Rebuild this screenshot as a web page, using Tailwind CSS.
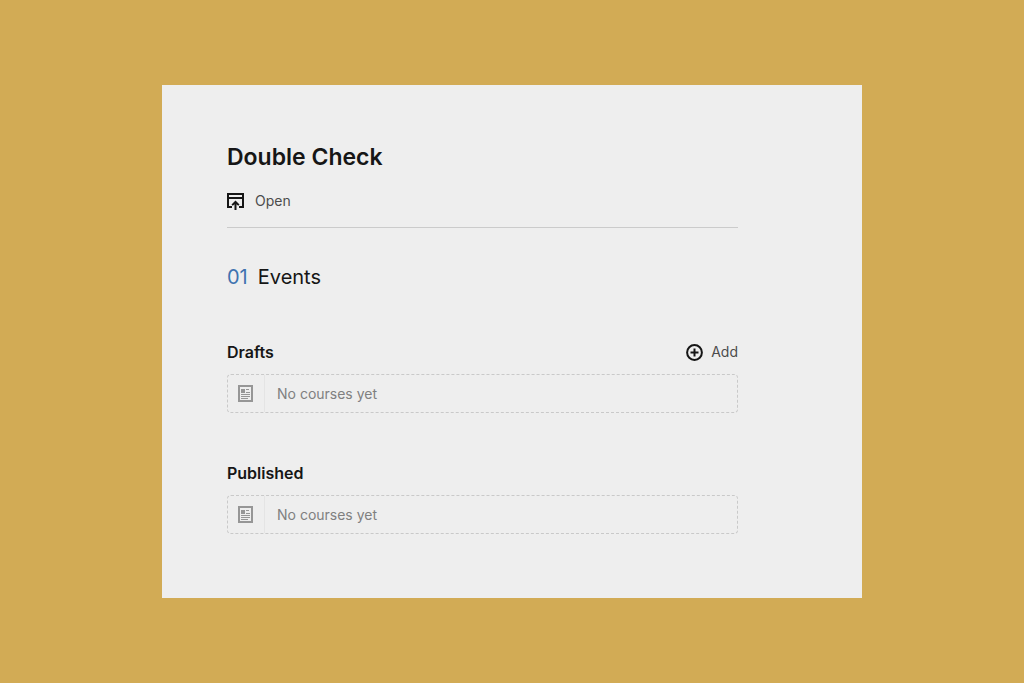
<!DOCTYPE html>
<html lang="en">
<head>
    <meta charset="UTF-8">
    <meta name="viewport" content="width=device-width, initial-scale=1">
    <title>Double Check</title>
    <script src="https://cdn.jsdelivr.net/npm/@tailwindcss/browser@4"></script>
</head>
<body class="bg-[#d2ab55] min-h-screen flex items-center justify-center font-['Inter',sans-serif] text-[#161616]">
    <main class="w-full max-w-[700px] bg-[#eeeeee] px-[65px] pt-14 pb-16">
        <div class="max-w-[511px]">
            <header class="border-b border-[#cbcbcb] pb-3.5">
                <h1 class="text-[23px] leading-8 font-semibold">Double Check</h1>
                <button type="button" class="mt-4 flex h-6 items-center gap-[11px] text-sm text-[#4c4c4c] cursor-pointer">
                    <svg class="size-[17px] text-[#161616]" viewBox="0 0 17 17" fill="none" stroke="currentColor" stroke-width="2" aria-hidden="true">
                        <path d="M5 14H1V1h15v13h-4M1 5h15M8.5 17v-7"/>
                        <path d="M8.5 7.5l4 4-1.2 1.2-2.8-2-2.8 2-1.2-1.2z" fill="currentColor" stroke="none"/>
                    </svg>
                    Open
                </button>
            </header>

            <h2 class="mt-[35px] flex gap-2.5 text-xl leading-7">
                <span class="text-[#3f73b0]">01</span>
                <span>Events</span>
            </h2>

            <!-- Drafts -->
            <section class="mt-[49px]">
                <div class="flex h-6 items-center justify-between">
                    <h3 class="text-base font-semibold">Drafts</h3>
                    <button type="button" class="flex items-center gap-2 text-sm text-[#4c4c4c] cursor-pointer">
                        <svg class="size-[17px] text-[#161616]" viewBox="0 0 17 17" fill="none" stroke="currentColor" stroke-width="2" aria-hidden="true">
                            <circle cx="8.5" cy="8.5" r="7.4"/>
                            <path d="M8.5 4.5v8M4.5 8.5h8"/>
                        </svg>
                        Add
                    </button>
                </div>
                <div class="mt-2.5 flex h-[39px] rounded border border-dashed border-[#c9c9c9]">
                    <div class="flex w-[37px] items-center border-r border-[#e4e4e4] pl-2.5">
                        <svg class="h-[17px] w-[15px] text-[#969696]" viewBox="0 0 15 17" fill="none" stroke="currentColor" aria-hidden="true">
                            <path d="M1 1h13v15H1z" stroke-width="2"/>
                            <path d="M3 4h4v4H3z" fill="currentColor" stroke="none"/>
                            <path d="M8 4.5h3M8 7.5h4M3 9.5h9M3 11.5h9M3 13.5h7"/>
                        </svg>
                    </div>
                    <p class="self-center pl-3 text-sm text-[#808080]">No courses yet</p>
                </div>
            </section>

            <!-- Published -->
            <section class="mt-12">
                <div class="flex h-6 items-center">
                    <h3 class="text-base font-semibold">Published</h3>
                </div>
                <div class="mt-2.5 flex h-[39px] rounded border border-dashed border-[#c9c9c9]">
                    <div class="flex w-[37px] items-center border-r border-[#e4e4e4] pl-2.5">
                        <svg class="h-[17px] w-[15px] text-[#969696]" viewBox="0 0 15 17" fill="none" stroke="currentColor" aria-hidden="true">
                            <path d="M1 1h13v15H1z" stroke-width="2"/>
                            <path d="M3 4h4v4H3z" fill="currentColor" stroke="none"/>
                            <path d="M8 4.5h3M8 7.5h4M3 9.5h9M3 11.5h9M3 13.5h7"/>
                        </svg>
                    </div>
                    <p class="self-center pl-3 text-sm text-[#808080]">No courses yet</p>
                </div>
            </section>
        </div>
    </main>
</body>
</html>
